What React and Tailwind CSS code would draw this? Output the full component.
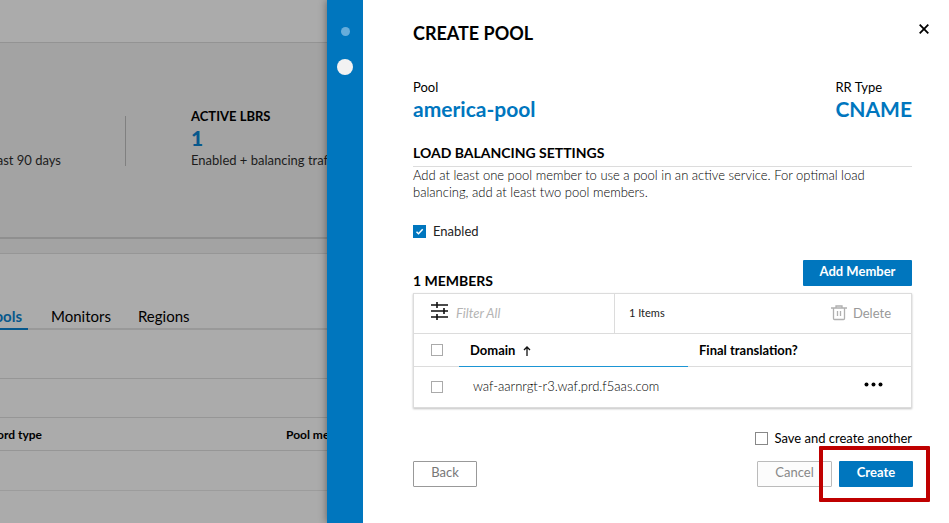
import React from "react";

const checkboxBase =
  "shrink-0 appearance-none border bg-white m-0";

function Stats() {
  return (
    <section className="flex h-[197px] shrink-0 items-start border-b-2 border-[#8f8f8f] border-t border-t-[#939393] bg-[#a3a3a3] pt-[65px]">
      <div className="mt-2 flex h-[50px] w-[126px] shrink-0 items-end border-r border-[#808080]">
        <p className="flex w-[61px] justify-end whitespace-nowrap text-[13px] leading-3 text-[#1c1c1c]">in the last 90 days</p>
      </div>
      <div className="ml-[65px] whitespace-nowrap">
        <h2 className="text-[13px] font-bold leading-4 text-black">ACTIVE LBRS</h2>
        <p className="text-[21px] font-black leading-7 text-[#07588c]">1</p>
        <p className="text-[13px] leading-4 text-[#1c1c1c]">Enabled + balancing traffic</p>
      </div>
    </section>
  );
}

function Backdrop() {
  return (
    <main className="flex min-w-0 flex-1 flex-col overflow-hidden bg-[#ababab]">
      <div className="h-[42px] shrink-0" />
      <Stats />
      <div className="h-[15px] shrink-0 border-b border-[#969696] bg-[#a3a3a3]" />
      <nav className="mt-[50px] flex h-[26px] shrink-0 border-b-2 border-[#999999] text-[15px] leading-6 text-black">
        <a href="#pools" className="flex h-[26px] w-[28px] justify-end border-b-2 border-[#07588c] pr-1.5 font-bold text-[#07588c]">
          Pools
        </a>
        <a href="#monitors" className="ml-[23px]">Monitors</a>
        <a href="#regions" className="ml-[27px]">Regions</a>
      </nav>
      <div className="h-[49px] shrink-0 border-b border-[#969696]" />
      <div className="h-[39px] shrink-0 border-b border-[#969696]" />
      <div className="flex h-[33px] shrink-0 items-center whitespace-nowrap border-b border-[#969696] pt-px text-[12px] font-bold text-black">
        <span className="flex w-[42px] shrink-0 justify-end">Record type</span>
        <span className="ml-[244px]">Pool members</span>
      </div>
      <div className="h-10 shrink-0 border-b border-[#9c9c9c]" />
    </main>
  );
}

function Members() {
  return (
    <div className="border border-[#dcdcdc] shadow-[0_1px_2px_rgba(0,0,0,0.25)]">
      <div className="flex h-10 border-b border-[#dcdcdc]">
        <label className="flex w-[201px] items-center border-r border-[#dcdcdc] pl-[17px]">
          <svg width="17" height="20" viewBox="0 0 17 20" className="mb-1.5 shrink-0" fill="none" stroke="#111" strokeWidth="1.6" aria-hidden="true">
            <path d="M0 4h17M0 10h17M0 16h17M6 1v6M13 7v6M6 13v6" />
          </svg>
          <input aria-label="Filter All" placeholder="Filter All" className="ml-2 w-32 text-[13px] italic outline-none placeholder:text-[#b4b4b4]" />
        </label>
        <span className="flex flex-1 items-center pl-3.5 text-[11px] text-[#222]">1 Items</span>
        <button className="flex items-center gap-1.5 pr-5 text-[13px] text-[#999]">
          <svg width="16" height="18" viewBox="0 0 16 18" className="mb-0.5" fill="none" stroke="#b0b0b0" strokeWidth="1.3" aria-hidden="true">
            <path d="M0 4h16M5 4V2h6v2M2.5 4v10.5q0 1 1 1h9q1 0 1-1V4M6.5 7v5M9.5 7v5" />
          </svg>
          Delete
        </button>
      </div>
      <table className="w-full table-fixed border-separate border-spacing-0 text-left">
        <thead>
          <tr className="h-[33px] text-[13px] text-black">
            <th className="w-[45px] border-b border-[#dcdcdc] pl-[17px]">
              <input type="checkbox" aria-label="Select all" className={`${checkboxBase} block size-3 border-[#aaa]`} />
            </th>
            <th className="w-[229px] border-b border-[#1b95d4] pl-[11px] pt-0.5">
              <span className="flex items-center gap-2">
                Domain
                <svg width="8" height="10" viewBox="0 0 8 10" fill="none" stroke="#111" strokeWidth="1.3" aria-hidden="true">
                  <path d="M4 10V1M1 4l3-3 3 3" />
                </svg>
              </span>
            </th>
            <th className="border-b border-[#dcdcdc] pl-[11px] pt-0.5">Final translation?</th>
          </tr>
        </thead>
        <tbody>
          <tr className="h-10 text-[13px] text-black">
            <td className="pl-[17px]">
              <input type="checkbox" aria-label="Select waf-aarnrgt-r3.waf.prd.f5aas.com" className={`${checkboxBase} block size-3 border-[#aaa]`} />
            </td>
            <td className="whitespace-nowrap pl-3.5 font-light">waf-aarnrgt-r3.waf.prd.f5aas.com</td>
            <td className="pb-1.5 pr-7">
              <button aria-label="More actions" className="ml-auto block">
                <svg width="19" height="5" viewBox="0 0 19 5" fill="#000" aria-hidden="true">
                  <circle cx="2.5" cy="2.5" r="2" />
                  <circle cx="9.5" cy="2.5" r="2" />
                  <circle cx="16.5" cy="2.5" r="2" />
                </svg>
              </button>
            </td>
          </tr>
        </tbody>
      </table>
    </div>
  );
}

export default function App() {
  return (
    <div className="flex min-h-screen overflow-hidden bg-white font-['Lato','Liberation_Sans',sans-serif]">
      <Backdrop />
      <aside className="flex w-[622px] shrink-0 shadow-[0_0_8px_rgba(0,0,0,0.45)]">
        <div className="flex w-9 shrink-0 flex-col items-center gap-[23px] bg-[#0076be] pt-[27px]">
          <span className="size-[9px] rounded-full bg-[#66addb]" />
          <span className="size-4 rounded-full bg-[#f2f2f2]" />
        </div>
        <div className="min-w-0 flex-1 bg-white pb-9 pl-[50px] pr-[37px] pt-[21px]">
          <header className="-mr-[17px] flex items-center justify-between">
            <h1 className="text-lg font-bold leading-6 text-black">CREATE POOL</h1>
            <button aria-label="Close" className="pb-2">
              <svg width="10" height="10" viewBox="0 0 10 10" stroke="#000" strokeWidth="1.8" aria-hidden="true">
                <path d="M.7.7l8.6 8.6M9.3.7L.7 9.3" />
              </svg>
            </button>
          </header>

          <dl className="mt-[34px] flex justify-between">
            <div>
              <dt className="text-[13px] leading-4 text-black">Pool</dt>
              <dd className="text-[21px] font-bold leading-7 text-[#0076be]">america-pool</dd>
            </div>
            <div>
              <dt className="text-[13px] leading-4 text-black">RR Type</dt>
              <dd className="text-[21px] font-bold leading-7 text-[#0076be]">CNAME</dd>
            </div>
          </dl>

          <h2 className="mt-5 border-b border-[#dcdcdc] pb-[3px] text-sm font-bold leading-5 text-black">LOAD BALANCING SETTINGS</h2>
          <p className="text-[13px] font-light leading-[17px] text-black">
            Add at least one pool member to use a pool in an active service. For optimal load
            <br />
            balancing, add at least two pool members.
          </p>

          <label className="mt-5 flex items-center gap-[7px] text-[13px] leading-5 text-[#222]">
            <span className="relative flex">
              <input type="checkbox" defaultChecked className="size-[13px] appearance-none bg-[#0076be]" />
              <svg width="13" height="13" viewBox="0 0 13 13" className="pointer-events-none absolute inset-0" fill="none" stroke="#fff" strokeWidth="1.5" aria-hidden="true">
                <path d="M3.5 6.7l2 2L9.7 4.3" />
              </svg>
            </span>
            Enabled
          </label>

          <div className="mb-1 mt-[19px] flex items-end justify-between">
            <h2 className="text-sm font-bold leading-4 text-black">1 MEMBERS</h2>
            <button className="mb-[3px] h-[26px] w-[109px] rounded-[1px] bg-[#0076be] pb-0.5 text-[13px] font-bold text-white">Add Member</button>
          </div>

          <Members />

          <label className="mt-5 flex items-center justify-end gap-1.5 text-[13px] leading-5 text-black">
            <input type="checkbox" className={`${checkboxBase} size-[13px] border-[#888]`} />
            Save and create another
          </label>

          <div className="-mr-px mt-[13px] flex items-center">
            <button className="h-[26px] w-16 rounded-[1px] border border-[#999] pb-0.5 text-[13px] text-[#777]">Back</button>
            <button className="ml-auto h-[26px] w-[75px] rounded-[1px] border border-[#bbb] bg-[#fcfcfc] pb-0.5 text-[13px] text-[#888]">Cancel</button>
            <div className="relative ml-[7px] flex">
              <button className="h-[26px] w-[74px] rounded-[1px] bg-[#0076be] pb-0.5 text-[13px] font-bold text-white">Create</button>
              <span className="pointer-events-none absolute -bottom-[15px] -left-5 -right-[17px] -top-[15px] rounded-[1px] border-4 border-[#bf0000]" />
            </div>
          </div>
        </div>
      </aside>
    </div>
  );
}
